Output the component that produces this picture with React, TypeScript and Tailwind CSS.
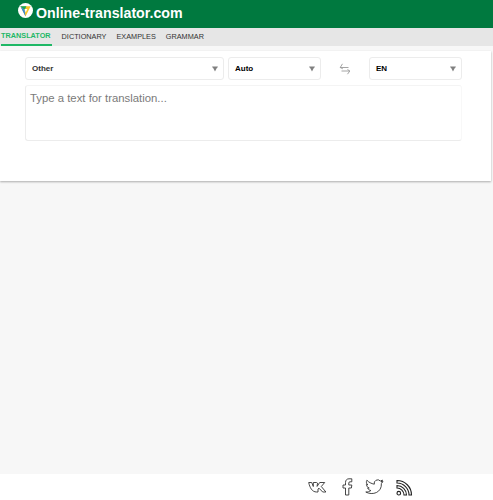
const font = { fontFamily: '"Liberation Sans", Arial, sans-serif' };

function Select({ label, className, bold }: { label: string; className: string; bold?: boolean }) {
  return (
    <div className={`flex h-[23px] items-center justify-between rounded-[3px] border border-[#ececec] bg-white pl-[6px] pr-[5px] ${className}`}>
      <span className={`text-[8px] font-bold ${bold ? "text-black" : "text-[#333333]"}`}>{label}</span>
      <svg width="6" height="6" viewBox="0 0 6 6" aria-hidden="true">
        <path d="M0.200 0.500h5.600v1.100h-0.700L3 5.500 0.900 1.600H0.200z" fill="#808080" />
      </svg>
    </div>
  );
}

function Tab({ label, active }: { label: string; active?: boolean }) {
  return (
    <div className={`flex h-[18px] items-center text-[7.3px] ${active ? "border-b-2 border-[#1fb866] pr-[1px] font-bold text-[#1fb866]" : "text-[#333333]"}`}>
      {label}
    </div>
  );
}

export default function App() {
  return (
    <div style={font} className="flex h-[500px] w-[493px] flex-col overflow-hidden bg-[#f7f7f7]">
      <header className="flex h-[28px] items-center bg-[#00793f] pl-[18px]">
        <svg width="15" height="15" viewBox="0 0 16 16" className="mb-[7px]" aria-hidden="true">
          <circle cx="8" cy="8" r="8" fill="#ffffff" />
          <path d="M2.500 3.500h11L8 14.500z" fill="#f7c52b" />
          <path d="M2.500 3.500h6.500L7 7.500z" fill="#16a85e" />
          <path d="M2.500 3.500 7 7.500 8 14.500z" fill="#2f86e0" />
          <path d="M7 6.500h3L8.200 10z" fill="#ffffff" />
        </svg>
        <span className="mb-[2px] ml-[3px] text-[14.2px] font-bold leading-none text-white">Online-translator.com</span>
      </header>
      <nav className="flex h-[18px] items-start gap-[10px] bg-[#e6e6e6] pl-[1px]">
        <Tab label="TRANSLATOR" active />
        <Tab label="DICTIONARY" />
        <Tab label="EXAMPLES" />
        <Tab label="GRAMMAR" />
      </nav>
      <main className="mt-[5px] w-[491px] bg-white px-[25px] pb-[40px] pt-[6px] shadow-[0_1px_2px_rgba(0,0,0,0.3)]">
        <div className="flex items-center">
          <Select label="Other" className="w-[199px]" />
          <Select label="Auto" bold className="ml-[4px] w-[93px]" />
          <div className="flex w-[48px] justify-center">
            <svg width="12" height="12" viewBox="0 0 12 12" fill="none" stroke="#9a9a9a" strokeWidth="0.9" aria-hidden="true">
              <path d="M9.500 4.500H1.200L3.500 0.800M1.200 4.500 3.800 5.800" />
              <path d="M2.500 8h8.300L8.500 6.500M10.800 8 8.500 11.200" />
            </svg>
          </div>
          <Select label="EN" bold className="w-[93px]" />
        </div>
        <div className="mt-[5px] h-[56px] w-[437px] rounded-[3px] border border-[#ececec] border-t-[#f4f4f4] border-r-[#f8f8f8] bg-white pl-[4px] pt-[4px] text-[11.350px] leading-[16px] text-[#7a7a7a]">
          Type a text for translation...
        </div>
      </main>
      <div className="flex-1" />
      <footer className="flex h-[26px] items-center gap-[12px] bg-white pl-[308px]">
        <svg width="19" height="13" viewBox="0 0 19 13" fill="none" stroke="#333" strokeWidth="0.9" aria-hidden="true">
          <path d="M0.700 1.500h3l1.600 4V1.500H8.500l1 .6-.4 3.300 2.600-3.900h5l-3.400 4 4.600 5.500h-3.200L11 7.200 10 8v3H8.600C4 11 1.800 6.500.7 1.500z" />
        </svg>
        <svg width="11" height="18" viewBox="0 0 11 18" fill="none" stroke="#333" strokeWidth="0.9" className="ml-[3px]" aria-hidden="true">
          <path d="M3.500 17V10H1V7h2.500V4.500C3.500 2 5 .8 7 .8h2.800v3H8c-.8 0-1.200.4-1.200 1.200v2h3l-.4 3H6.800V17z" />
        </svg>
        <svg width="19" height="16" viewBox="0 0 19 16" fill="none" stroke="#333" strokeWidth="0.9" aria-hidden="true">
          <path d="M18 2.500c-.7.3-1.300.5-2 .5.700-.4 1.300-1.100 1.500-1.900-.7.4-1.400.7-2.200.9a3.500 3.500 0 0 0-6 3.200C6.300 4.600 3.700 3.300 1.900 1.200c-1 1.700-.5 3.700 1 4.700-.5 0-1.100-.2-1.500-.4 0 1.700 1.200 3.100 2.800 3.500-.5.100-1 .1-1.500 0 .4 1.400 1.700 2.400 3.200 2.500-1.500 1.200-3.400 1.700-5.100 1.500C7.500 16.800 17 13.500 16.400 4.500c.6-.5 1.200-1.200 1.600-2z" />
        </svg>
        <svg width="17" height="17" viewBox="0 0 17 17" fill="none" stroke="#222" strokeWidth="1.100" aria-hidden="true">
          <circle cx="2.800" cy="14.200" r="1.800" />
          <path d="M1 6.500a9.500 9.500 0 0 1 9.500 9.500H8A7 7 0 0 0 1 9z" />
          <path d="M1 1.500A14.500 14.500 0 0 1 15.500 16H13A12 12 0 0 0 1 4z" />
        </svg>
      </footer>
    </div>
  );
}
